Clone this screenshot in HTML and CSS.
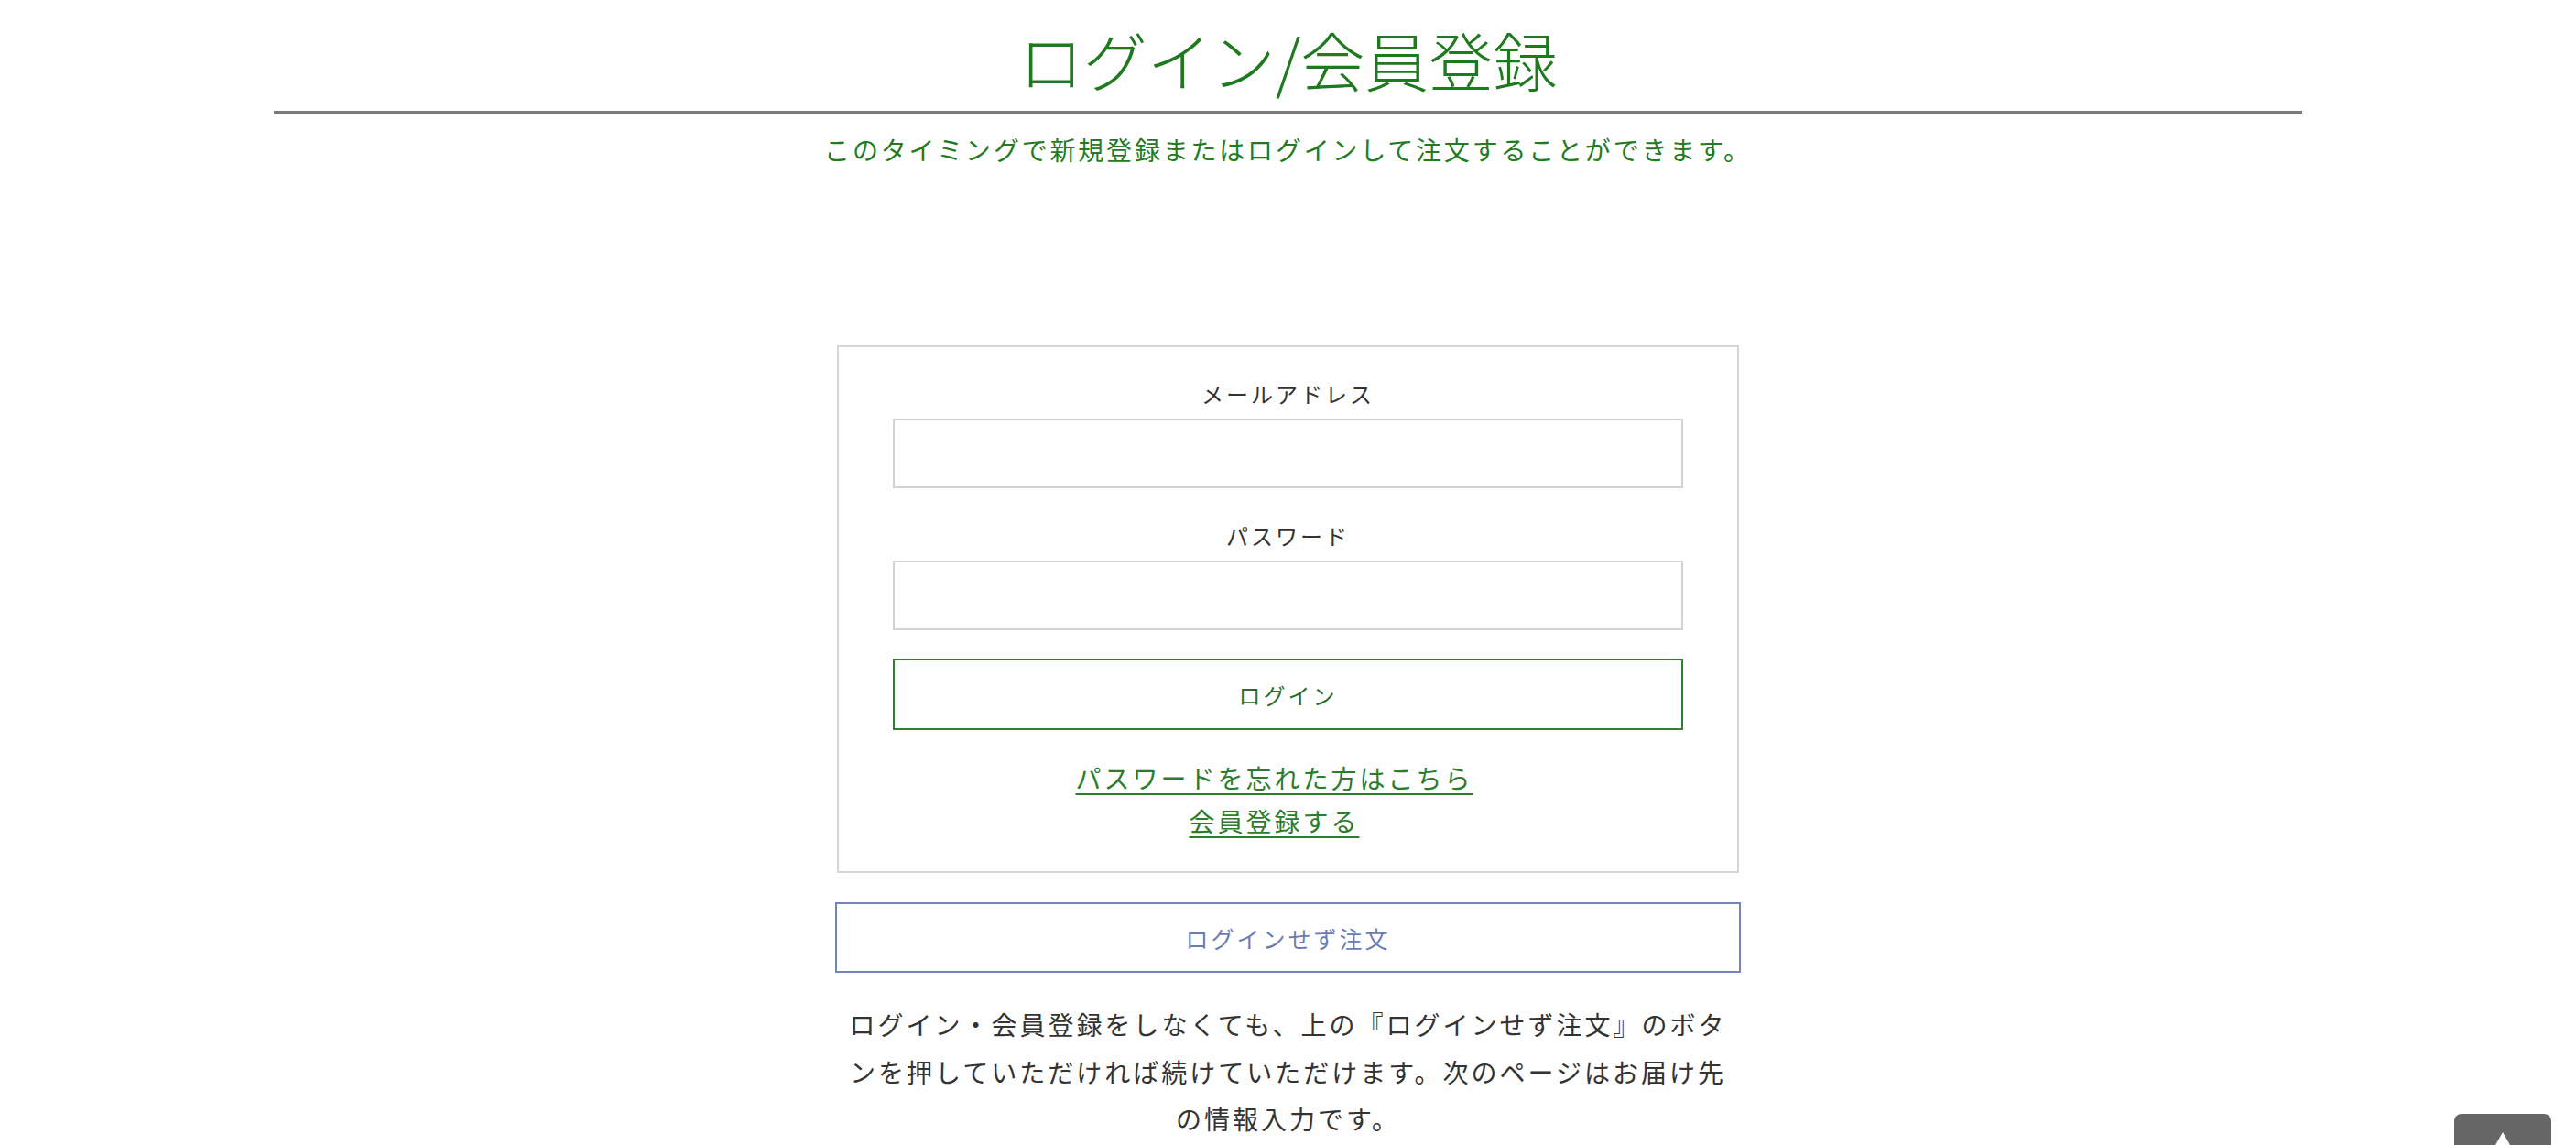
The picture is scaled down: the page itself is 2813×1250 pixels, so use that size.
FILE: index.html
```html
<!DOCTYPE html>
<html lang="ja">
<head>
<meta charset="utf-8">
<title>ログイン/会員登録</title>
<link rel="stylesheet" href="styles.css">
</head>
<body>
<header class="page-head">
  <h1 class="page-title">ログイン/会員登録</h1>
  <p class="page-lead">このタイミングで新規登録またはログインして注文することができます。</p>
</header>
<main class="login-area">
  <form class="login-box">
    <label class="field-label" for="email">メールアドレス</label>
    <input class="field-input" id="email" type="email">
    <label class="field-label field-label-2" for="pass">パスワード</label>
    <input class="field-input" id="pass" type="password">
    <button class="btn-login" type="button">ログイン</button>
    <div class="links">
      <a class="text-link" href="#">パスワードを忘れた方はこちら</a>
      <a class="text-link" href="#">会員登録する</a>
    </div>
  </form>
  <button class="btn-guest" type="button">ログインせず注文</button>
  <p class="guest-note">ログイン・会員登録をしなくても、上の『ログインせず注文』のボタンを押していただければ続けていただけます。次のページはお届け先の情報入力です。</p>
</main>
<a class="to-top" href="#"><span class="to-top-arrow"></span></a>
</body>
</html>
```
FILE: styles.css
```css
html, body {
  margin: 0;
  padding: 0;
  background: #fefefe;
}
body {
  font-family: "Noto Sans CJK JP", "Noto Sans", sans-serif;
  color: #333;
}
.page-head {
  width: 2215px;
  margin: 0 auto;
}
.page-title {
  margin: 0;
  padding: 24px 0 15px;
  font-size: 70px;
  line-height: 82px;
  font-weight: 300;
  color: #1f7a1f;
  text-align: center;
  border-bottom: 3px solid #7a7a7a;
}
.page-lead {
  margin: 19px 0 0;
  font-size: 28px;
  line-height: 40px;
  letter-spacing: 2.8px;
  color: #237a23;
  text-align: center;
}
.login-area {
  width: 989px;
  margin: 194px auto 0;
  display: flex;
  flex-direction: column;
  align-items: center;
}
.login-box {
  box-sizing: border-box;
  width: 985px;
  border: 2px solid #d6d6d6;
  padding: 33px 59px 31px;
  display: flex;
  flex-direction: column;
}
.field-label {
  font-size: 24px;
  line-height: 36px;
  letter-spacing: 3px;
  color: #333;
  text-align: center;
  margin-bottom: 9px;
}
.field-label-2 {
  margin-top: 34px;
}
.field-input {
  box-sizing: border-box;
  width: 100%;
  height: 76px;
  margin: 0;
  border: 2px solid #d2d2d2;
  background: #fff;
  font-size: 24px;
  padding: 0 16px;
  outline: none;
}
.btn-login {
  box-sizing: border-box;
  width: 100%;
  height: 78px;
  margin-top: 31px;
  border: 2px solid #2f7f2f;
  background: #fff;
  font-family: inherit;
  font-size: 24px;
  letter-spacing: 3px;
  color: #2a6e2a;
  cursor: pointer;
}
.links {
  margin-top: 29px;
  padding-right: 30px;
  display: flex;
  flex-direction: column;
  align-items: center;
}
.text-link {
  font-size: 28px;
  line-height: 47px;
  letter-spacing: 3px;
  color: #2b7d2b;
  text-decoration: underline;
  text-decoration-thickness: 2px;
  text-underline-offset: 5px;
}
.btn-guest {
  box-sizing: border-box;
  width: 989px;
  height: 77px;
  margin-top: 32px;
  border: 2px solid #7185b9;
  background: #fff;
  font-family: inherit;
  font-size: 25px;
  letter-spacing: 3px;
  color: #6a7db3;
  cursor: pointer;
}
.guest-note {
  width: 970px;
  margin: 31px 0 0;
  font-size: 28px;
  line-height: 51.5px;
  letter-spacing: 3px;
  color: #333;
  text-align: center;
}
.to-top {
  position: fixed;
  right: 27px;
  bottom: -36px;
  width: 106px;
  height: 70px;
  background: #666;
  border-radius: 8px;
  display: flex;
  justify-content: center;
  align-items: flex-start;
}
.to-top-arrow {
  margin-top: 20px;
  width: 0;
  height: 0;
  border-left: 8px solid transparent;
  border-right: 8px solid transparent;
  border-bottom: 14px solid #fff;
}
```
